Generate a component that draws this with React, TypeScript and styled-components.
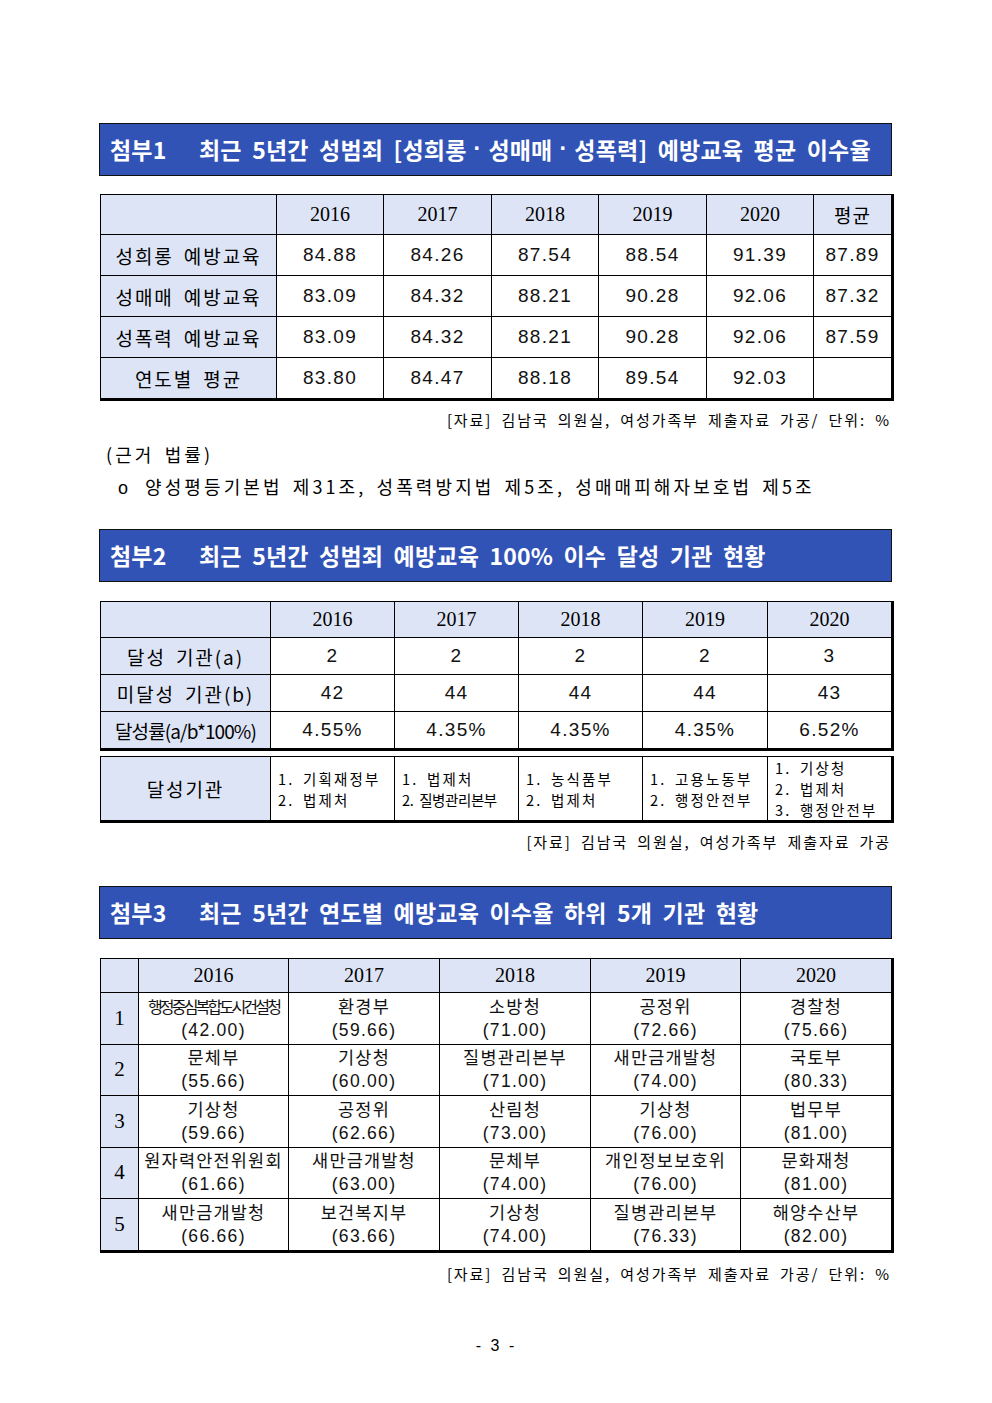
import React from 'react'
import styled, { createGlobalStyle } from 'styled-components'

const GlobalStyle = createGlobalStyle`
  body {
    margin: 0;
    background: #fff;
    color: #000;
    font-family: 'Noto Sans CJK KR', 'Liberation Sans', sans-serif;
  }
`

const KR = `'Noto Sans CJK KR', 'Liberation Sans', sans-serif`
const NUM = `'Liberation Sans', 'Noto Sans CJK KR', sans-serif`
const SERIF = `'Liberation Serif', 'Noto Sans CJK KR', serif`

const years = ['2016', '2017', '2018', '2019', '2020']

const table1 = [
  { label: '성희롱 예방교육', values: ['84.88', '84.26', '87.54', '88.54', '91.39', '87.89'] },
  { label: '성매매 예방교육', values: ['83.09', '84.32', '88.21', '90.28', '92.06', '87.32'] },
  { label: '성폭력 예방교육', values: ['83.09', '84.32', '88.21', '90.28', '92.06', '87.59'] },
  { label: '연도별 평균', values: ['83.80', '84.47', '88.18', '89.54', '92.03', ''] },
]

const table2 = [
  { label: '달성 기관(a)', values: ['2', '2', '2', '2', '3'] },
  { label: '미달성 기관(b)', values: ['42', '44', '44', '44', '43'] },
  { label: '달성률(a/b*100%)', values: ['4.55%', '4.35%', '4.35%', '4.35%', '6.52%'], tight: true },
]

const achieved = [
  ['1. 기획재정부', '2. 법제처'],
  ['1. 법제처', '2. 질병관리본부'],
  ['1. 농식품부', '2. 법제처'],
  ['1. 고용노동부', '2. 행정안전부'],
  ['1. 기상청', '2. 법제처', '3. 행정안전부'],
]

const table3 = [
  [['행정중심복합도시건설청', '42.00'], ['환경부', '59.66'], ['소방청', '71.00'], ['공정위', '72.66'], ['경찰청', '75.66']],
  [['문체부', '55.66'], ['기상청', '60.00'], ['질병관리본부', '71.00'], ['새만금개발청', '74.00'], ['국토부', '80.33']],
  [['기상청', '59.66'], ['공정위', '62.66'], ['산림청', '73.00'], ['기상청', '76.00'], ['법무부', '81.00']],
  [['원자력안전위원회', '61.66'], ['새만금개발청', '63.00'], ['문체부', '74.00'], ['개인정보보호위', '76.00'], ['문화재청', '81.00']],
  [['새만금개발청', '66.66'], ['보건복지부', '63.66'], ['기상청', '74.00'], ['질병관리본부', '76.33'], ['해양수산부', '82.00']],
]

const Page = styled.div`
  width: 992px;
  min-height: 1403px;
  box-sizing: border-box;
  padding: 123px 100px 0 99px;
`

const TitleBar = styled.div<{ $mt?: number }>`
  height: 53px;
  box-sizing: border-box;
  margin-top: ${p => p.$mt ?? 0}px;
  background: #3253b6;
  border: 1.5px solid #111;
  display: flex;
  align-items: center;
  padding: 0 0 2px 10px;
  color: #fff;
  font-family: ${KR};
  font-weight: 700;
  font-size: 23px;
  letter-spacing: 0.2px;
  word-spacing: 5px;
  white-space: pre;
`

const TitleTag = styled.span`
  width: 89px;
  flex: none;
`

const Dot = styled.span`
  font-family: 'Liberation Sans', sans-serif;
  padding: 0 7px;
`

const Table = styled.table<{ $mt: number }>`
  width: 792px;
  margin-top: ${p => p.$mt}px;
  margin-left: 1px;
  border-collapse: collapse;
  table-layout: fixed;
  border-top: 1px solid #000;
  border-left: 1px solid #000;
  border-right: 3px solid #000;
  border-bottom: 3px solid #000;
`

const HeadCell = styled.td<{ $h: number }>`
  height: ${p => p.$h}px;
  padding: 0;
  border: 1px solid #000;
  background: #dde4f5;
  text-align: center;
  font-family: ${SERIF};
  font-size: 20px;
`

const HeadKr = styled.span`
  font-family: ${KR};
  font-size: 19px;
  letter-spacing: 1px;
`

const LabelCell = styled.td<{ $h: number; $tight?: boolean }>`
  height: ${p => p.$h}px;
  padding: 0;
  border: 1px solid #000;
  background: #dde4f5;
  text-align: center;
  font-family: ${KR};
  font-size: 19px;
  letter-spacing: ${p => (p.$tight ? '-0.9px' : '1.9px')};
  word-spacing: ${p => (p.$tight ? '0' : '4px')};
  white-space: nowrap;
`

const NumCell = styled.td<{ $h: number }>`
  height: ${p => p.$h}px;
  padding: 0;
  border: 1px solid #000;
  text-align: center;
  font-family: ${NUM};
  font-size: 19px;
  letter-spacing: 1.3px;
  color: #111;
`

const ListCell = styled.td`
  height: 61px;
  padding: 0 0 0 7px;
  border: 1px solid #000;
  vertical-align: middle;
  font-family: ${KR};
  font-size: 14.5px;
  line-height: 21px;
  white-space: nowrap;
`

const ListLine = styled.div<{ $tight?: boolean }>`
  letter-spacing: ${p => (p.$tight ? '-0.4px' : '2.2px')};
  word-spacing: 3px;
`

const RankCell = styled.td`
  height: 49.5px;
  padding: 0;
  border: 1px solid #000;
  background: #dde4f5;
  text-align: center;
  font-family: ${SERIF};
  font-size: 21px;
`

const AgencyCell = styled.td`
  height: 49.5px;
  padding: 0 0 1px;
  border: 1px solid #000;
  text-align: center;
  font-size: 17.5px;
  line-height: 24px;
  color: #111;
  white-space: nowrap;
`

const AgencyName = styled.div<{ $tight?: boolean }>`
  font-family: ${KR};
  letter-spacing: ${p => (p.$tight ? '-2.8px' : '1.2px')};
  font-size: ${p => (p.$tight ? '16px' : '17.5px')};
`

const AgencyScore = styled.div`
  font-family: ${NUM};
  letter-spacing: 1.3px;
`

const Source = styled.div<{ $mt: number }>`
  margin-top: ${p => p.$mt}px;
  text-align: right;
  padding-right: 1px;
  font-family: ${KR};
  font-size: 15px;
  line-height: 20px;
  letter-spacing: 1.9px;
  word-spacing: 4px;
`

const Note = styled.div<{ $mt: number; $indent: number }>`
  margin-top: ${p => p.$mt}px;
  padding-left: ${p => p.$indent}px;
  font-family: ${KR};
  font-size: 18px;
  line-height: 24px;
  letter-spacing: 3.1px;
  word-spacing: 3px;
  white-space: nowrap;
`

const Bullet = styled.span`
  display: inline-block;
  width: 27px;
  font-family: ${NUM};
`

const PageNum = styled.div`
  margin-top: 53px;
  text-align: center;
  font-family: ${NUM};
  font-size: 16px;
  letter-spacing: 1px;
  word-spacing: 3px;
`

export default function App() {
  return (
    <>
      <GlobalStyle />
      <Page>
        <TitleBar>
          <TitleTag>첨부1</TitleTag>
          최근 5년간 성범죄 [성희롱<Dot>·</Dot>성매매<Dot>·</Dot>성폭력] 예방교육 평균 이수율
        </TitleBar>

        <Table $mt={18}>
          <colgroup>
            {[176, 107, 108, 107, 108, 107, 79].map((w, i) => (
              <col key={i} style={{ width: w }} />
            ))}
          </colgroup>
          <tbody>
            <tr>
              <HeadCell $h={39} />
              {years.map(y => (
                <HeadCell key={y} $h={39}>{y}</HeadCell>
              ))}
              <HeadCell $h={39}>
                <HeadKr>평균</HeadKr>
              </HeadCell>
            </tr>
            {table1.map(row => (
              <tr key={row.label}>
                <LabelCell $h={40}>{row.label}</LabelCell>
                {row.values.map((v, i) => (
                  <NumCell key={i} $h={40}>{v}</NumCell>
                ))}
              </tr>
            ))}
          </tbody>
        </Table>

        <Source $mt={9}>[자료] 김남국 의원실, 여성가족부 제출자료 가공/ 단위: %</Source>
        <Note $mt={12} $indent={7}>(근거 법률)</Note>
        <Note $mt={8} $indent={19}>
          <Bullet>o</Bullet>양성평등기본법 제31조, 성폭력방지법 제5조, 성매매피해자보호법 제5조
        </Note>

        <TitleBar $mt={29}>
          <TitleTag>첨부2</TitleTag>
          최근 5년간 성범죄 예방교육 100% 이수 달성 기관 현황
        </TitleBar>

        <Table $mt={19}>
          <colgroup>
            {[170, 124, 124, 124, 125, 125].map((w, i) => (
              <col key={i} style={{ width: w }} />
            ))}
          </colgroup>
          <tbody>
            <tr>
              <HeadCell $h={35} />
              {years.map(y => (
                <HeadCell key={y} $h={35}>{y}</HeadCell>
              ))}
            </tr>
            {table2.map(row => (
              <tr key={row.label}>
                <LabelCell $h={36} $tight={row.tight}>{row.label}</LabelCell>
                {row.values.map((v, i) => (
                  <NumCell key={i} $h={36}>{v}</NumCell>
                ))}
              </tr>
            ))}
          </tbody>
        </Table>

        <Table $mt={5}>
          <colgroup>
            {[170, 124, 124, 124, 125, 125].map((w, i) => (
              <col key={i} style={{ width: w }} />
            ))}
          </colgroup>
          <tbody>
            <tr>
              <LabelCell $h={61}>달성기관</LabelCell>
              {achieved.map((lines, i) => (
                <ListCell key={i}>
                  {lines.map(l => (
                    <ListLine key={l} $tight={l.includes('질병')}>{l}</ListLine>
                  ))}
                </ListCell>
              ))}
            </tr>
          </tbody>
        </Table>

        <Source $mt={9}>[자료] 김남국 의원실, 여성가족부 제출자료 가공</Source>

        <TitleBar $mt={34}>
          <TitleTag>첨부3</TitleTag>
          최근 5년간 연도별 예방교육 이수율 하위 5개 기관 현황
        </TitleBar>

        <Table $mt={19}>
          <colgroup>
            {[38, 150, 151, 151, 150, 152].map((w, i) => (
              <col key={i} style={{ width: w }} />
            ))}
          </colgroup>
          <tbody>
            <tr>
              <HeadCell $h={33} />
              {years.map(y => (
                <HeadCell key={y} $h={33}>{y}</HeadCell>
              ))}
            </tr>
            {table3.map((row, r) => (
              <tr key={r}>
                <RankCell>{r + 1}</RankCell>
                {row.map(([name, score], i) => (
                  <AgencyCell key={i}>
                    <AgencyName $tight={name.length > 10}>{name}</AgencyName>
                    <AgencyScore>({score})</AgencyScore>
                  </AgencyCell>
                ))}
              </tr>
            ))}
          </tbody>
        </Table>

        <Source $mt={11}>[자료] 김남국 의원실, 여성가족부 제출자료 가공/ 단위: %</Source>
        <PageNum>- 3 -</PageNum>
      </Page>
    </>
  )
}
